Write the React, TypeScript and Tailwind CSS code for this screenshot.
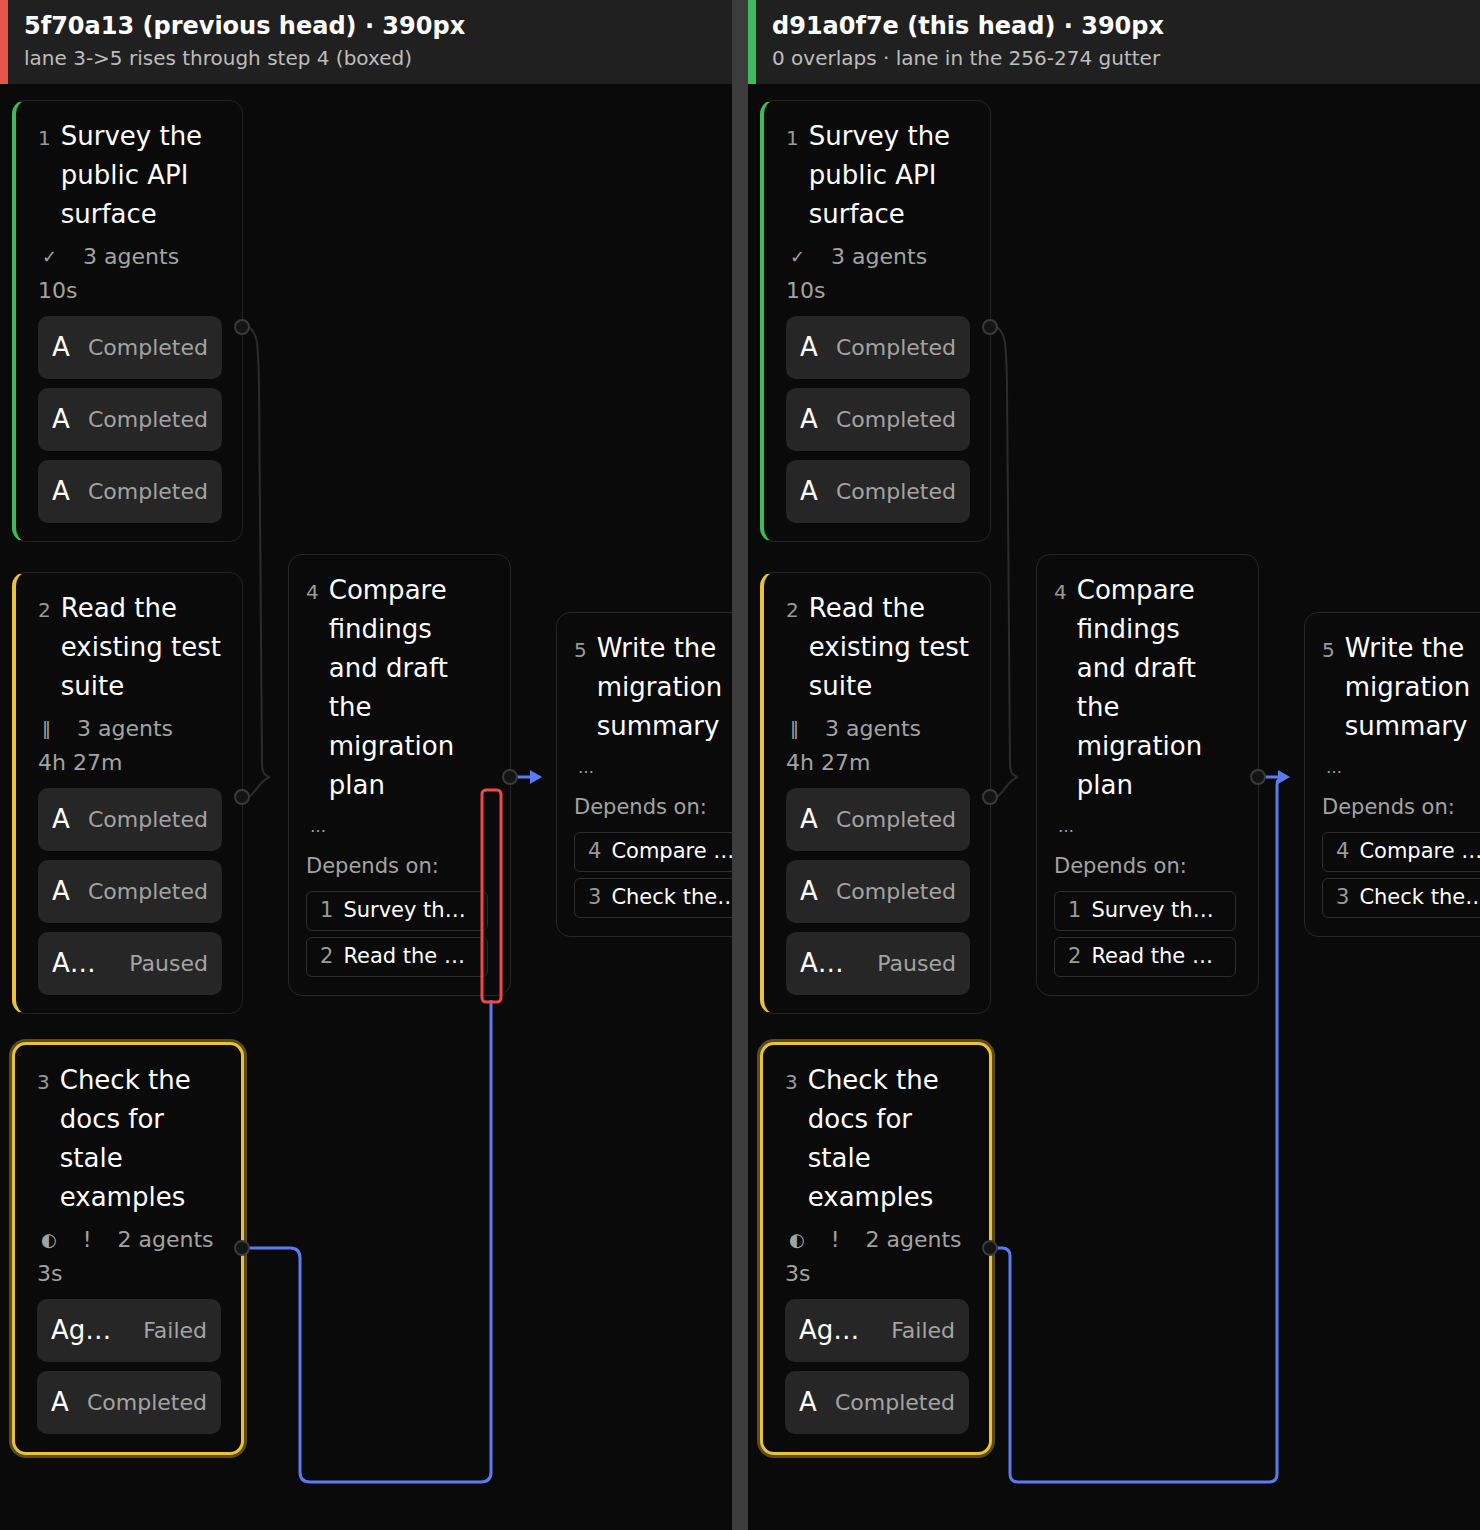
import React from "react";

type Agent = { name: string; status: string };

function AgentRow({ a }: { a: Agent }) {
  return (
    <div className="flex h-[63px] items-center justify-between gap-3 rounded-[10px] bg-[#262626] px-[14px]">
      <span className="min-w-0 truncate text-[26px] text-white">{a.name}</span>
      <span className="shrink-0 text-[22px] text-[#a3a3a3]">{a.status}</span>
    </div>
  );
}

function StepCard({
  n,
  title,
  meta,
  agents,
  className,
}: {
  n: number;
  title: string;
  meta: string[];
  agents: Agent[];
  className: string;
}) {
  return (
    <div className={"absolute rounded-[14px] bg-[#0a0a0a] pb-[18px] pl-[22px] pr-[20px] pt-[16px] " + className}>
      <div className="flex gap-[10px]">
        <span className="pt-[6px] text-[20px] text-[#9a9a9a]">{n}</span>
        <span className="text-[26px] leading-[39px] text-white">{title}</span>
      </div>
      <div className="mt-[6px] flex flex-wrap gap-x-[26px] text-[22px] leading-[34px] text-[#a3a3a3]">
        {meta.map((m, i) => (
          <span key={i} className={i === 0 ? "pl-[4px] text-[18px]" : ""}>
            {m}
          </span>
        ))}
      </div>
      <div className="mt-[8px] flex flex-col gap-[9px]">
        {agents.map((a, i) => (
          <AgentRow key={i} a={a} />
        ))}
      </div>
    </div>
  );
}

function DepCard({
  n,
  title,
  deps,
  className,
}: {
  n: number;
  title: string;
  deps: [number, string][];
  className: string;
}) {
  return (
    <div className={"absolute overflow-hidden rounded-[14px] border border-[#262626] bg-[#0a0a0a] pb-[18px] pl-[17px] pr-[22px] pt-[16px] " + className}>
      <div className="flex gap-[10px]">
        <span className="pt-[6px] text-[20px] text-[#9a9a9a]">{n}</span>
        <span className="text-[26px] leading-[39px] text-white">{title}</span>
      </div>
      <div className="mt-[10px] pl-[4px] text-[16px] text-[#a3a3a3]">…</div>
      <div className="mt-[12px] text-[21px] text-[#a3a3a3]">Depends on:</div>
      <div className="mt-[8px] flex flex-col gap-[6px]">
        {deps.map(([d, t], i) => (
          <div key={i} className="flex h-[40px] items-center gap-[10px] whitespace-nowrap rounded-[6px] border border-[#2e2e2e] px-[13px] text-[21px]">
            <span className="text-[#9a9a9a]">{d}</span>
            <span className="truncate text-white">{t}</span>
          </div>
        ))}
      </div>
    </div>
  );
}

const done: Agent = { name: "A", status: "Completed" };

function Port({ x, y }: { x: number; y: number }) {
  return <circle cx={x} cy={y} r={7} fill="#141414" stroke="#3a3a3a" strokeWidth={2} />;
}

function Panel({ prev }: { prev: boolean }) {
  return (
    <div className="relative flex h-[1530px] w-[732px] flex-col overflow-hidden bg-[#0a0a0a]">
      <div className="flex h-[84px] shrink-0 bg-[#202020]">
        <div className={"w-[8px] " + (prev ? "bg-[#e5534b]" : "bg-[#3fb95f]")} />
        <div className="pl-[16px] pt-[9px]">
          <div className="text-[24px] font-bold leading-[34px] text-white">
            {prev ? "5f70a13 (previous head) · 390px" : "d91a0f7e (this head) · 390px"}
          </div>
          <div className="text-[20px] leading-[30px] text-[#bdbdbd]">
            {prev ? "lane 3->5 rises through step 4 (boxed)" : "0 overlaps · lane in the 256-274 gutter"}
          </div>
        </div>
      </div>
      <div className="relative flex-1">
        <StepCard
          n={1}
          title="Survey the public API surface"
          meta={["✓", "3 agents", "10s"]}
          agents={[done, done, done]}
          className="left-[12px] top-[16px] w-[231px] border border-l-4 border-[#222] border-l-[#3fb95f]"
        />
        <StepCard
          n={2}
          title="Read the existing test suite"
          meta={["‖", "3 agents", "4h 27m"]}
          agents={[done, done, { name: "A…", status: "Paused" }]}
          className="left-[12px] top-[488px] w-[231px] border border-l-4 border-[#222] border-l-[#e8c23a]"
        />
        <StepCard
          n={3}
          title="Check the docs for stale examples"
          meta={["◐", "!", "2 agents", "3s"]}
          agents={[{ name: "Ag…", status: "Failed" }, done]}
          className="left-[12px] top-[958px] w-[232px] border-[3px] border-[#e8c23a] shadow-[0_0_0_3px_#5c4c1c]"
        />
        <DepCard
          n={4}
          title="Compare findings and draft the migration plan"
          deps={[[1, "Survey th…"], [2, "Read the …"]]}
          className="left-[288px] top-[470px] w-[223px]"
        />
        <DepCard
          n={5}
          title="Write the migration summary"
          deps={[[4, "Compare the findings"], [3, "Check the docs"]]}
          className="left-[556px] top-[528px] w-[223px]"
        />
        <svg className="pointer-events-none absolute left-0 top-0" width={732} height={1446}>
          <path d="M249 243 C 258 250, 258 260, 259 300 L 262 680 C 262 690, 266 692, 270 693" fill="none" stroke="#2c2c2c" strokeWidth={2} />
          <path d="M249 713 C 258 706, 260 696, 270 693" fill="none" stroke="#2c2c2c" strokeWidth={2} />
          <path d="M517 693 L 532 693" stroke="#5b7cf0" strokeWidth={3} />
          <path d="M530 686 L 542 693 L 530 700 Z" fill="#5b7cf0" />
          {prev ? (
            <path d="M249 1164 L 290 1164 Q 300 1164 300 1174 L 300 1388 Q 300 1398 310 1398 L 481 1398 Q 491 1398 491 1388 L 491 916" fill="none" stroke="#5b7cf0" strokeWidth={3} />
          ) : (
            <path d="M249 1164 L 254 1164 Q 262 1164 262 1172 L 262 1390 Q 262 1398 270 1398 L 521 1398 Q 529 1398 529 1390 L 529 701 Q 529 693 537 693" fill="none" stroke="#5b7cf0" strokeWidth={3} />
          )}
          <Port x={242} y={243} />
          <Port x={242} y={713} />
          <Port x={510} y={693} />
          <Port x={242} y={1164} />
          {prev && <rect x={482} y={706} width={19} height={212} rx={4} fill="none" stroke="#f0474a" strokeWidth={3} />}
        </svg>
      </div>
    </div>
  );
}

export default function App() {
  return (
    <div className="flex h-[1530px] w-[1480px] bg-[#3c3c3c] font-[DejaVu_Sans,sans-serif]">
      <Panel prev />
      <div className="w-[16px]" />
      <Panel prev={false} />
    </div>
  );
}
